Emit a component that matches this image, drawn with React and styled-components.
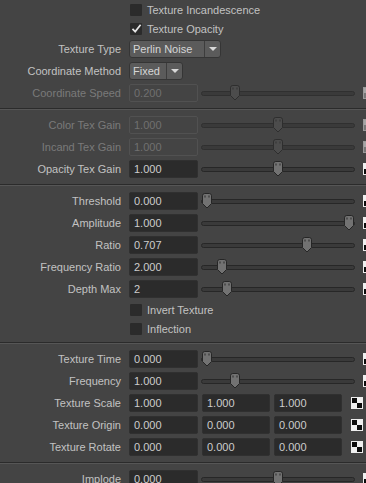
import React from 'react';
import styled, { createGlobalStyle } from 'styled-components';

const GlobalStyle = createGlobalStyle`
  html, body {
    margin: 0;
    padding: 0;
    background: #444444;
    overflow: hidden;
  }
  body {
    font-family: "Liberation Sans", Arial, sans-serif;
    font-size: 11px;
    color: #c2c2c2;
  }
`;

const Panel = styled.div`
  width: 375px;
  background: #444444;
`;

const Section = styled.div`
  display: flex;
  flex-direction: column;
  padding: ${p => (p.$first ? '0 0 4px' : '4px 0')};
`;

const Separator = styled.div`
  height: 0;
  border-top: 1px solid #2b2b2b;
  border-bottom: 1px solid #565656;
`;

const Row = styled.div`
  display: flex;
  align-items: center;
  height: ${p => (p.$short ? '19px' : '22px')};
  flex-shrink: 0;
`;

const Label = styled.div`
  width: 121px;
  flex-shrink: 0;
  text-align: right;
  white-space: nowrap;
  color: ${p => (p.$disabled ? '#7a7a7a' : '#c2c2c2')};
`;

const Field = styled.div`
  margin-left: ${p => p.$ml || 8}px;
  width: ${p => p.$w || 69}px;
  height: 18px;
  box-sizing: border-box;
  flex-shrink: 0;
  display: flex;
  align-items: center;
  padding-left: 4px;
  border-radius: 2px;
  background: ${p => (p.$disabled ? 'transparent' : '#2b2b2b')};
  border: 1px solid ${p => (p.$disabled ? '#515151' : '#303030')};
  color: ${p => (p.$disabled ? '#707070' : '#cdcdcd')};
`;

const SliderWrap = styled.div`
  position: relative;
  margin-left: 3px;
  width: 154px;
  height: 22px;
  flex-shrink: 0;
`;

const Track = styled.div`
  position: absolute;
  left: 0;
  right: 0;
  top: 9px;
  height: 5px;
  box-sizing: border-box;
  border-radius: 3px;
  background: #3a3a3a;
  border: 1px solid ${p => (p.$disabled ? '#303030' : '#272727')};
`;

const Handle = styled.svg`
  position: absolute;
  top: 3px;
  width: 12px;
  height: 16px;
`;

const MapIcon = styled.div`
  margin-left: ${p => p.$ml || 8}px;
  width: 12px;
  height: 12px;
  flex-shrink: 0;
  box-sizing: border-box;
  border: 1px solid ${p => (p.$disabled ? '#9a9a9a' : '#eeeeee')};
  background: ${p =>
    p.$disabled
      ? 'conic-gradient(#767676 0 25%, #a6a6a6 0 50%, #767676 0 75%, #a6a6a6 0)'
      : p.$vector
      ? 'conic-gradient(#f0f0f0 0 25%, #0c0c0c 0 50%, #f0f0f0 0 75%, #0c0c0c 0)'
      : 'conic-gradient(#0c0c0c 0 25%, #f0f0f0 0 50%, #0c0c0c 0 75%, #f0f0f0 0)'};
`;

const CheckBox = styled.div`
  margin-left: 9px;
  width: 12px;
  height: 12px;
  flex-shrink: 0;
  border-radius: 1px;
  background: #2b2b2b;
  display: flex;
  align-items: center;
  justify-content: center;
`;

const CheckText = styled.span`
  margin-left: 5px;
  color: #c2c2c2;
  white-space: nowrap;
`;

const Dropdown = styled.div`
  margin-left: 8px;
  width: ${p => p.$w}px;
  height: 18px;
  box-sizing: border-box;
  flex-shrink: 0;
  display: flex;
  align-items: stretch;
  border-radius: 3px;
  background: #5b5b5b;
  border: 1px solid #353535;
  color: #d6d6d6;
`;

const DropText = styled.div`
  flex: 1;
  display: flex;
  align-items: center;
  padding-left: 3px;
  white-space: nowrap;
  overflow: hidden;
`;

const DropArrow = styled.div`
  width: 15px;
  border-left: 1px solid #3d3d3d;
  display: flex;
  align-items: center;
  justify-content: center;

  &::after {
    content: '';
    border-left: 4px solid transparent;
    border-right: 4px solid transparent;
    border-top: 4px solid #d8d8d8;
  }
`;

const Check = () => (
  <svg width="11" height="11" viewBox="0 0 11 11">
    <path d="M1.5 5.8 L4.2 8.6 L9.6 1.8" fill="none" stroke="#e6e6e6" strokeWidth="1.7" />
  </svg>
);

const Slider = ({ frac, disabled }) => (
  <SliderWrap>
    <Track $disabled={disabled} />
    <Handle viewBox="0 0 12 16" style={{ left: `${Math.round(frac * 142)}px` }}>
      <path
        d="M1.5 2.8 Q1.5 0.5 3.8 0.5 H8.2 Q10.5 0.5 10.5 2.8 V10.5 L6 15 L1.5 10.5 Z"
        fill={disabled ? '#4c4c4c' : '#727272'}
        stroke={disabled ? '#2e2e2e' : '#262626'}
        strokeWidth="1"
      />
      <rect x="3.5" y="2.5" width="1" height="2" fill={disabled ? '#333' : '#2a2a2a'} />
      <rect x="7.5" y="2.5" width="1" height="2" fill={disabled ? '#333' : '#2a2a2a'} />
    </Handle>
  </SliderWrap>
);

const SliderRow = ({ label, value, frac, disabled }) => (
  <Row>
    <Label $disabled={disabled}>{label}</Label>
    <Field $disabled={disabled}>{value}</Field>
    <Slider frac={frac} disabled={disabled} />
    <MapIcon $disabled={disabled} />
  </Row>
);

const VectorRow = ({ label, values }) => (
  <Row>
    <Label>{label}</Label>
    <Field>{values[0]}</Field>
    <Field $ml={4} $w={68}>{values[1]}</Field>
    <Field $ml={4} $w={68}>{values[2]}</Field>
    <MapIcon $ml={9} $vector />
  </Row>
);

const CheckRow = ({ label, checked }) => (
  <Row $short>
    <Label />
    <CheckBox>{checked && <Check />}</CheckBox>
    <CheckText>{label}</CheckText>
  </Row>
);

const DropRow = ({ label, value, width }) => (
  <Row>
    <Label>{label}</Label>
    <Dropdown $w={width}>
      <DropText>{value}</DropText>
      <DropArrow />
    </Dropdown>
  </Row>
);

const noiseRows = [
  { label: 'Threshold', value: '0.000', frac: 0 },
  { label: 'Amplitude', value: '1.000', frac: 1 },
  { label: 'Ratio', value: '0.707', frac: 0.707 },
  { label: 'Frequency Ratio', value: '2.000', frac: 0.105 },
  { label: 'Depth Max', value: '2', frac: 0.14 },
];

export default function App() {
  return (
    <>
      <GlobalStyle />
      <Panel>
        <Section $first>
          <CheckRow label="Texture Incandescence" />
          <CheckRow label="Texture Opacity" checked />
          <DropRow label="Texture Type" value="Perlin Noise" width={92} />
          <DropRow label="Coordinate Method" value="Fixed" width={54} />
          <SliderRow label="Coordinate Speed" value="0.200" frac={0.196} disabled />
        </Section>
        <Separator />
        <Section>
          <SliderRow label="Color Tex Gain" value="1.000" frac={0.5} disabled />
          <SliderRow label="Incand Tex Gain" value="1.000" frac={0.5} disabled />
          <SliderRow label="Opacity Tex Gain" value="1.000" frac={0.5} />
        </Section>
        <Separator />
        <Section>
          {noiseRows.map(r => (
            <SliderRow key={r.label} {...r} />
          ))}
          <CheckRow label="Invert Texture" />
          <CheckRow label="Inflection" />
        </Section>
        <Separator />
        <Section>
          <SliderRow label="Texture Time" value="0.000" frac={0} />
          <SliderRow label="Frequency" value="1.000" frac={0.196} />
          <VectorRow label="Texture Scale" values={['1.000', '1.000', '1.000']} />
          <VectorRow label="Texture Origin" values={['0.000', '0.000', '0.000']} />
          <VectorRow label="Texture Rotate" values={['0.000', '0.000', '0.000']} />
        </Section>
        <Separator />
        <Section>
          <SliderRow label="Implode" value="0.000" frac={0.5} />
        </Section>
      </Panel>
    </>
  );
}
